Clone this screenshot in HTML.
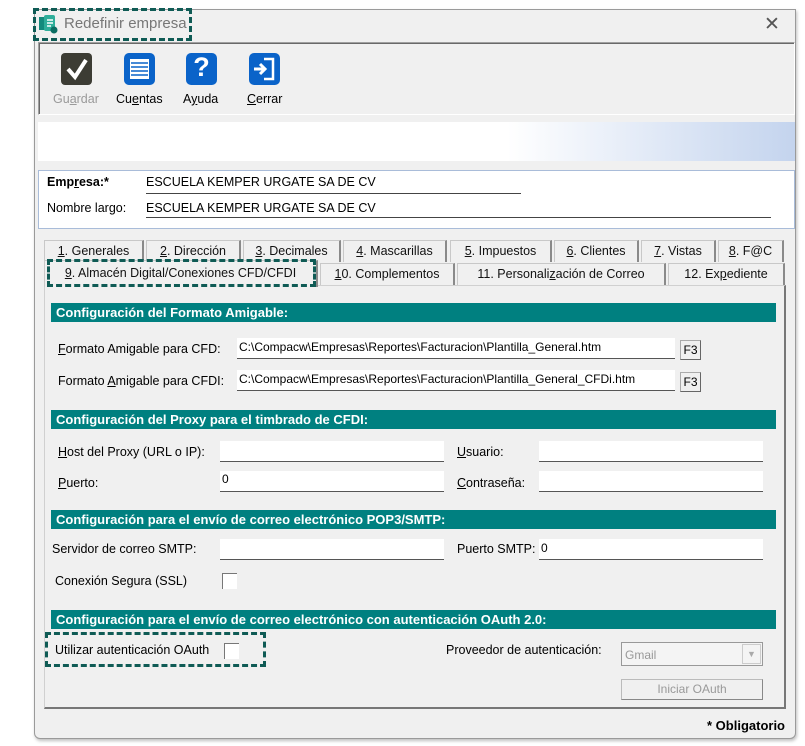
<!DOCTYPE html>
<html><head><meta charset="utf-8"><style>
*{box-sizing:border-box;margin:0;padding:0}
body{width:805px;height:746px;background:#fff;position:relative;overflow:hidden;font-family:"Liberation Sans",Arial,sans-serif;font-size:12px;color:#000}
.a{position:absolute}
.win{left:34px;top:9px;width:762px;height:730px;background:#f0f0f0;border:1px solid #9a9a9a;border-radius:0 0 6px 6px;box-shadow:1px 2px 3px rgba(0,0,0,.25)}
.dash{border:3px dashed #0f5b55}
.tb{left:38px;top:42px;width:757px;height:73px;border:1px solid #a0a0a0;border-bottom-color:#fff;border-right-color:#fff;box-shadow:inset 1px 1px 0 #696969}
.ic{width:31px;height:32px;border-radius:5px;background:#0a63c9}
.lbl{font-size:12.5px}
.tab{height:22px;border:1px solid #c8c8c8;border-bottom:none;border-right:2px solid #8a8a8a;background:#f0f0f0;text-align:center;line-height:21px;font-size:12.5px;color:#111}
.hdr{left:51px;width:725px;height:19px;background:#008080;color:#fff;font-weight:bold;font-size:13px;line-height:19px;padding-left:5px}
.inp{background:#fff;border-bottom:1px solid #555;height:21px;line-height:19px;padding-left:2px;font-size:12px}
.f3{width:21px;height:20px;border:1px solid #aaa;border-right-color:#666;border-bottom-color:#666;background:#f0f0f0;text-align:center;line-height:19px;font-size:12px}
.cb{width:15px;height:16px;background:#fff;border-left:1px solid #777;border-top:1px solid #777}
u{text-decoration:underline}
</style></head><body>
<div class="a win"></div>
<div class="a dash" style="left:33px;top:8px;width:159px;height:33px"></div>
<svg class="a" style="left:39px;top:14px" width="20" height="20"><rect x="0" y="3" width="7" height="13" fill="#138a7c"/><rect x="5" y="1" width="11" height="16" rx="2" fill="#2fae9a"/><path d="M8 6h6M8 9h6M8 12h4" stroke="#fff" stroke-width="1.4"/><circle cx="15" cy="16" r="3.5" fill="#0c6e63"/></svg>
<div class="a" style="left:64px;top:15px;font-size:15px;color:#777">Redefinir empresa</div>
<div class="a" style="left:764px;top:13px;font-size:19px;color:#555">✕</div>
<div class="a tb"></div>
<div class="a" style="left:61px;top:53px;width:31px;height:32px;border-radius:4px;background:#3c3c34"></div>
<svg class="a" style="left:61px;top:53px" width="31" height="32"><path d="M7 16l7 8 11-17" stroke="#fff" stroke-width="4" fill="none"/></svg>
<div class="a lbl" style="left:53px;top:92px;color:#9a9a9a">Gu<u>a</u>rdar</div>
<div class="a ic" style="left:124px;top:53px"></div>
<svg class="a" style="left:124px;top:53px" width="31" height="32"><rect x="6" y="6" width="19" height="20" fill="#fff"/><path d="M7 10h17M7 14h17M7 18h17M7 22h17" stroke="#0a63c9" stroke-width="1.6"/></svg>
<div class="a lbl" style="left:116px;top:92px">Cu<u>e</u>ntas</div>
<div class="a ic" style="left:186px;top:53px"></div>
<div class="a" style="left:186px;top:52px;width:31px;text-align:center;color:#fff;font-weight:bold;font-size:27px">?</div>
<div class="a lbl" style="left:183px;top:92px">A<u>y</u>uda</div>
<div class="a ic" style="left:249px;top:53px"></div>
<svg class="a" style="left:249px;top:53px" width="31" height="32"><path d="M15 6h9v20h-9" stroke="#fff" stroke-width="2.5" fill="none"/><path d="M5 16h10M11 11l5 5-5 5" stroke="#fff" stroke-width="3" fill="none"/></svg>
<div class="a lbl" style="left:247px;top:92px"><u>C</u>errar</div>
<div class="a" style="left:38px;top:122px;width:757px;height:39px;background:linear-gradient(90deg,#fff 0%,#fff 62%,#c4d4ee 100%)"></div>
<div class="a" style="left:38px;top:170px;width:757px;height:59px;background:#fff;border:1px solid #a9bcd9"></div>
<div class="a" style="left:47px;top:175px;font-weight:bold;font-size:12.5px">Emp<u>r</u>esa:*</div>
<div class="a" style="left:146px;top:175px;font-size:12.5px">ESCUELA KEMPER URGATE SA DE CV</div>
<div class="a" style="left:146px;top:193px;width:375px;height:1px;background:#444"></div>
<div class="a" style="left:47px;top:201px;font-size:12.5px">Nombre largo:</div>
<div class="a" style="left:146px;top:201px;font-size:12.5px">ESCUELA KEMPER URGATE SA DE CV</div>
<div class="a" style="left:146px;top:217px;width:625px;height:1px;background:#444"></div>

<div class="a tab" style="left:44px;top:240px;width:100px"><u>1</u>. Generales</div>
<div class="a tab" style="left:146px;top:240px;width:95px"><u>2</u>. Dirección</div>
<div class="a tab" style="left:243px;top:240px;width:98px"><u>3</u>. Decimales</div>
<div class="a tab" style="left:343px;top:240px;width:104px"><u>4</u>. Mascarillas</div>
<div class="a tab" style="left:450px;top:240px;width:102px"><u>5</u>. Impuestos</div>
<div class="a tab" style="left:554px;top:240px;width:85px"><u>6</u>. Clientes</div>
<div class="a tab" style="left:641px;top:240px;width:75px"><u>7</u>. Vistas</div>
<div class="a tab" style="left:718px;top:240px;width:66px"><u>8</u>. F@C</div>
<div class="a" style="left:44px;top:285px;width:742px;height:424px;border:1px solid #d0d0d0;border-right:2px solid #777;border-bottom:2px solid #777"></div>
<div class="a tab" style="left:320px;top:263px;width:135px"><u>1</u>0. Complementos</div>
<div class="a tab" style="left:457px;top:263px;width:209px">11. Personali<u>z</u>ación de Correo</div>
<div class="a tab" style="left:668px;top:263px;width:117px">12. Ex<u>p</u>ediente</div>
<div class="a tab" style="left:44px;top:260px;width:274px;height:27px;border-bottom:none;line-height:24px"><u>9</u>. Almacén Digital/Conexiones CFD/CFDI</div>
<div class="a dash" style="left:47px;top:259px;width:269px;height:28px"></div>

<div class="a hdr" style="top:303px">Configuración del Formato Amigable:</div>
<div class="a" style="left:58px;top:342px;font-size:12.5px"><u>F</u>ormato Amigable para CFD:</div>
<div class="a inp" style="left:237px;top:338px;width:438px">C:\Compacw\Empresas\Reportes\Facturacion\Plantilla_General.htm</div>
<div class="a f3" style="left:680px;top:340px">F3</div>
<div class="a" style="left:58px;top:374px;font-size:12.5px">Formato <u>A</u>migable para CFDI:</div>
<div class="a inp" style="left:237px;top:370px;width:438px">C:\Compacw\Empresas\Reportes\Facturacion\Plantilla_General_CFDi.htm</div>
<div class="a f3" style="left:680px;top:372px">F3</div>

<div class="a hdr" style="top:410px">Configuración del Proxy para el timbrado de CFDI:</div>
<div class="a" style="left:58px;top:445px;font-size:12.5px"><u>H</u>ost del Proxy (URL o IP):</div>
<div class="a inp" style="left:220px;top:441px;width:224px"></div>
<div class="a" style="left:457px;top:445px;font-size:12.5px"><u>U</u>suario:</div>
<div class="a inp" style="left:539px;top:441px;width:224px"></div>
<div class="a" style="left:58px;top:476px;font-size:12.5px"><u>P</u>uerto:</div>
<div class="a inp" style="left:220px;top:471px;width:224px;line-height:17px">0</div>
<div class="a" style="left:457px;top:476px;font-size:12.5px"><u>C</u>ontraseña:</div>
<div class="a inp" style="left:539px;top:471px;width:224px"></div>

<div class="a hdr" style="top:510px">Configuración para el envío de correo electrónico POP3/SMTP:</div>
<div class="a" style="left:52px;top:542px;font-size:12.5px">Servidor de correo SMTP:</div>
<div class="a inp" style="left:220px;top:539px;width:224px"></div>
<div class="a" style="left:457px;top:542px;font-size:12.5px">Puerto SMTP:</div>
<div class="a inp" style="left:539px;top:539px;width:224px">0</div>
<div class="a" style="left:55px;top:574px;font-size:12.5px">Conexión Segura (SSL)</div>
<div class="a cb" style="left:222px;top:573px"></div>

<div class="a hdr" style="top:610px">Configuración para el envío de correo electrónico con autenticación OAuth 2.0:</div>
<div class="a dash" style="left:45px;top:632px;width:221px;height:35px"></div>
<div class="a" style="left:55px;top:643px;font-size:12.5px">Utilizar autenticación OAuth</div>
<div class="a cb" style="left:224px;top:643px"></div>
<div class="a" style="left:446px;top:643px;font-size:12.5px">Proveedor de autenticación:</div>
<div class="a" style="left:621px;top:642px;width:142px;height:24px;border:1px solid #999;background:#f4f4f4;color:#999;padding:5px 3px;font-size:12px">Gmail</div>
<div class="a" style="left:742px;top:644px;width:19px;height:20px;border:1px solid #ccc;color:#aaa;font-size:9px;text-align:center;line-height:19px">▼</div>
<div class="a" style="left:621px;top:679px;width:142px;height:21px;border:1px solid #bbb;border-right-color:#888;border-bottom-color:#888;color:#999;text-align:center;line-height:19px;font-size:12px">Iniciar OAuth</div>
<div class="a" style="left:707px;top:718px;font-weight:bold;font-size:13px">* Obligatorio</div>
</body></html>
